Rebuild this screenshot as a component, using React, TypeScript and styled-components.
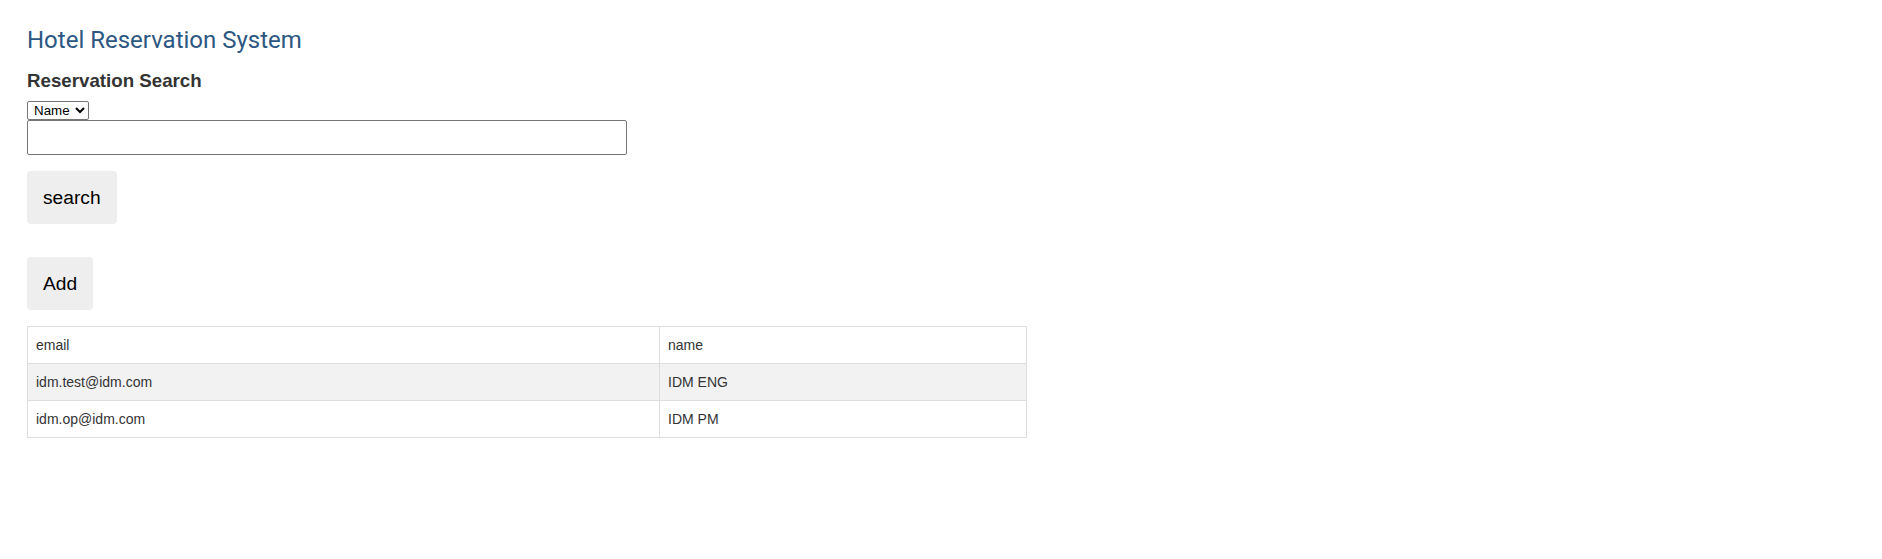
import React, {useState} from 'react';
import styled, {createGlobalStyle} from "styled-components";

const GlobalStyle = createGlobalStyle`
  body {
    margin: 0;
    background: #fff;
    font-family: "Liberation Sans", Arial, sans-serif;
    color: #333;
  }
`

const Page = styled.div`
  display: flex;
  flex-direction: column;
  align-items: flex-start;
  padding: 26px 27px;
`
const Title = styled.h1`
  margin: 0;
  font-family: Roboto, "Liberation Sans", sans-serif;
  font-weight: 400;
  font-size: 24px;
  line-height: 28px;
  color: #2c5781;
`
const SectionTitle = styled.h3`
  margin: 16px 0 9px;
  font-size: 18.72px;
  line-height: 22px;
  font-weight: 700;
  color: #333;
`
const FieldSelect = styled.select`
  display: block;
  box-sizing: border-box;
  height: 19px;
  margin: 0;
  padding: 0 2px;
  font-family: "Liberation Sans", Arial, sans-serif;
  font-size: 13.33px;
  color: #000;
  background: #fff;
  border: 1px solid #767676;
  border-radius: 2px;
`
const SearchInput = styled.input`
  box-sizing: border-box;
  width: 600px;
  height: 35px;
  margin: 0;
  padding: 0 6px;
  font-family: "Liberation Sans", Arial, sans-serif;
  font-size: 16px;
  border: 1px solid #767676;
  border-radius: 2px;
`
const Button = styled.button<{ $gap: number }>`
  margin-top: ${p => p.$gap}px;
  padding: 16px;
  font-family: "Liberation Sans", Arial, sans-serif;
  font-size: 19.2px;
  line-height: 21px;
  color: #000;
  background: #eee;
  border: none;
  border-radius: 4px;
  cursor: pointer;
`
const Table = styled.table`
  margin-top: 16px;
  width: 1000px;
  border-collapse: collapse;
  font-size: 14px;
  line-height: 20px;
  color: #333;
`
const Row = styled.tr<{ $striped?: boolean }>`
  background: ${p => p.$striped ? '#f2f2f2' : '#fff'};
`
const Cell = styled.td`
  padding: 8px;
  border: 1px solid #ddd;
  text-align: left;
`

const rows = [
    {email: 'idm.test@idm.com', name: 'IDM ENG'},
    {email: 'idm.op@idm.com', name: 'IDM PM'},
]

const App = () => {
    const [field, setField] = useState('name');
    const [query, setQuery] = useState('');

    return (
        <>
            <GlobalStyle/>
            <Page>
                <Title>Hotel Reservation System</Title>
                <SectionTitle>Reservation Search</SectionTitle>
                <FieldSelect value={field} onChange={e => setField(e.target.value)}>
                    <option value="name">Name</option>
                    <option value="email">Email</option>
                </FieldSelect>
                <SearchInput value={query} onChange={e => setQuery(e.target.value)}/>
                <Button $gap={16}>search</Button>
                <Button $gap={33}>Add</Button>
                <Table>
                    <tbody>
                    <Row>
                        <Cell style={{width: 615}}>email</Cell>
                        <Cell>name</Cell>
                    </Row>
                    {rows.map((r, i) =>
                        <Row key={r.email} $striped={i % 2 === 0}>
                            <Cell>{r.email}</Cell>
                            <Cell>{r.name}</Cell>
                        </Row>
                    )}
                    </tbody>
                </Table>
            </Page>
        </>
    );
};

export default App;
